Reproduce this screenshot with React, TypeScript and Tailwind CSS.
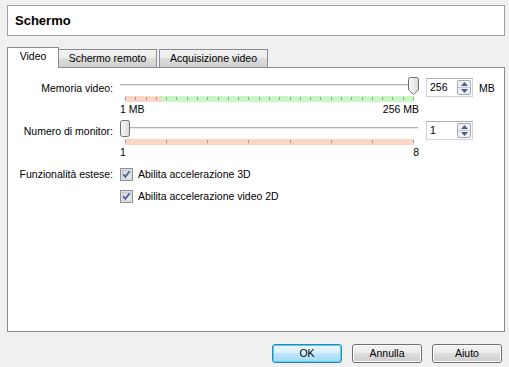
import React from 'react'

const font = "font-['Liberation_Sans',Arial,sans-serif]"

function Thumb({ pointed }: { pointed?: boolean }) {
  return (
    <svg width="11" height="18" viewBox="0 0 11 18" className="block">
      <defs>
        <linearGradient id={pointed ? 'tg1' : 'tg2'} x1="0" y1="0" x2="1" y2="0">
          <stop offset="0" stopColor="#f7f7f7" />
          <stop offset="0.5" stopColor="#ececec" />
          <stop offset="1" stopColor="#d6d6d6" />
        </linearGradient>
      </defs>
      {pointed ? (
        <path
          d="M2.5 0.5 H8.5 Q10.5 0.5 10.5 2.5 V13 L5.5 17.5 L0.5 13 V2.5 Q0.5 0.5 2.5 0.5 Z"
          fill="url(#tg1)"
          stroke="#707070"
        />
      ) : (
        <path
          d="M2.5 0.5 H7.5 Q9.5 0.5 9.5 2.5 V14 Q9.5 16.5 7.5 16.5 H2.5 Q0.5 16.5 0.5 14 V2.5 Q0.5 0.5 2.5 0.5 Z"
          fill="url(#tg2)"
          stroke="#707070"
        />
      )}
    </svg>
  )
}

function TickBar({ ticks, redWidth }: { ticks: number; redWidth: number }) {
  const w = 289
  const lines = Array.from({ length: ticks + 1 }, (_, i) => Math.round((i * (w - 1)) / ticks) + 0.5)
  return (
    <svg width={w} height="6" className="block ml-[5px]">
      <rect x="0" y="0" width={redWidth} height="6" fill="#fdd5c6" />
      <rect x={redWidth} y="0" width={w - redWidth} height="6" fill="#c9f7c3" />
      {lines.map((x) => (
        <line key={x} x1={x} y1="1" x2={x} y2="4" stroke="#9a9a9a" strokeWidth="1" />
      ))}
    </svg>
  )
}

function Slider({ at, pointed, ticks, redWidth, min, max }: { at: 'start' | 'end'; pointed?: boolean; ticks: number; redWidth: number; min: string; max: string }) {
  return (
    <div className="w-[300px] shrink-0">
      <div className="relative h-[19px]">
        <div className="absolute left-0 top-[7px] w-[298px] h-[2px] border-t border-[#b0b0b0] bg-[#e8e8e8]" />
        <div className={`absolute top-0 ${at === 'end' ? 'left-[288px]' : 'left-0'}`}>
          <Thumb pointed={pointed} />
        </div>
      </div>
      <TickBar ticks={ticks} redWidth={redWidth} />
      <div className="mt-px flex justify-between leading-[13px] w-[299px]">
        <span>{min}</span>
        <span>{max}</span>
      </div>
    </div>
  )
}

function SpinBox({ value }: { value: string }) {
  return (
    <div className="mt-px w-[47px] h-[19px] shrink-0 bg-white border border-[#cfd3d9] border-t-[#abadb3] flex items-center pl-[3px] pr-px">
      <span className="flex-1 leading-[13px]">{value}</span>
      <div className="w-[14px] h-[15px] border border-[#a9abae] rounded-[2px] flex flex-col bg-[#eef0f3]">
        <div className="flex-1 flex items-center justify-center border-b border-[#c3c6cb]">
          <svg width="7" height="4" viewBox="0 0 7 4"><path d="M0 4 L3.5 0 L7 4 Z" fill="#4d6185" /></svg>
        </div>
        <div className="flex-1 flex items-center justify-center">
          <svg width="7" height="4" viewBox="0 0 7 4"><path d="M0 0 L7 0 L3.5 4 Z" fill="#4d6185" /></svg>
        </div>
      </div>
    </div>
  )
}

function CheckBox({ label }: { label: string }) {
  return (
    <div className="flex items-center gap-[5px]">
      <svg width="13" height="13" viewBox="0 0 13 13" className="block shrink-0">
        <defs>
          <linearGradient id="cbg" x1="0" y1="0" x2="1" y2="1">
            <stop offset="0" stopColor="#cbcfd5" />
            <stop offset="1" stopColor="#f6f6f6" />
          </linearGradient>
        </defs>
        <rect x="0.5" y="0.5" width="12" height="12" fill="#f4f4f4" stroke="#8e8f8f" />
        <rect x="2" y="2" width="9" height="9" fill="url(#cbg)" stroke="#aeb3b9" strokeWidth="0.6" />
        <path d="M3.3 6.4 L5.4 8.8 L9.6 3.2" fill="none" stroke="#4a5f97" strokeWidth="1.7" />
      </svg>
      <span className="leading-[13px]">{label}</span>
    </div>
  )
}

const btn =
  'w-[70px] h-[19px] rounded-[3px] border flex items-center justify-center leading-[13px] text-black'

export default function App() {
  return (
    <div className={`${font} text-[10.5px] text-black w-[509px] h-[367px] bg-[#f0f0f0] pt-[5px] pl-[7px] pr-[4px] flex flex-col`}>
      {/* Header */}
      <div className="h-[31px] bg-white border border-[#a0a0a0] flex items-center pl-[7px]">
        <span className="text-[13px] font-bold">Schermo</span>
      </div>

      {/* Tabs */}
      <div className="mt-[11px] h-[20px] flex items-end">
        <div className="relative z-10 -mb-px w-[52px] h-[21px] bg-white border border-b-0 border-[#898c95] flex items-center justify-center pb-[2px]">
          Video
        </div>
        <div className="w-[98px] h-[18px] border border-l-0 border-b-0 border-[#898c95] bg-[linear-gradient(#f2f2f2,#ebebeb_50%,#dddddd_50%,#cfcfcf)] flex items-center justify-center">
          Schermo remoto
        </div>
        <div className="ml-[2px] w-[109px] h-[18px] border border-b-0 border-[#898c95] bg-[linear-gradient(#f2f2f2,#ebebeb_50%,#dddddd_50%,#cfcfcf)] flex items-center justify-center">
          Acquisizione video
        </div>
      </div>

      {/* Panel */}
      <div className="h-[265px] bg-white border border-[#898c95] pt-[9px]">
        <div className="flex items-start">
          <div className="w-[105px] shrink-0 text-right mt-[5px] leading-[13px]">Memoria video:</div>
          <div className="ml-[7px]">
            <Slider at="end" pointed ticks={28} redWidth={36} min="1 MB" max="256 MB" />
          </div>
          <div className="ml-[6px]">
            <SpinBox value="256" />
          </div>
          <div className="ml-[6px] mt-[5px] leading-[13px]">MB</div>
        </div>

        <div className="flex items-start mt-[4px]">
          <div className="w-[105px] shrink-0 text-right mt-[5px] leading-[13px]">Numero di monitor:</div>
          <div className="ml-[7px]">
            <Slider at="start" ticks={7} redWidth={289} min="1" max="8" />
          </div>
          <div className="ml-[6px]">
            <SpinBox value="1" />
          </div>
        </div>

        <div className="flex items-center mt-[9px]">
          <div className="w-[105px] shrink-0 text-right leading-[13px]">Funzionalità estese:</div>
          <div className="ml-[7px]">
            <CheckBox label="Abilita accelerazione 3D" />
          </div>
        </div>
        <div className="flex items-center mt-[9px] pl-[112px]">
          <CheckBox label="Abilita accelerazione video 2D" />
        </div>
      </div>

      {/* Buttons */}
      <div className="mt-[12px] flex justify-end gap-[10px] pr-[3px]">
        <button className={`${btn} border-[#3c7fb1] bg-[linear-gradient(#eaf6fd,#d9f0fc_50%,#bee6fd_50%,#a7d9f5)] shadow-[inset_0_0_0_1px_#48d6f8]`}>
          OK
        </button>
        <button className={`${btn} border-[#707070] bg-[linear-gradient(#f2f2f2,#ebebeb_50%,#dddddd_50%,#cfcfcf)] shadow-[inset_0_0_0_1px_#fcfcfc]`}>
          Annulla
        </button>
        <button className={`${btn} border-[#707070] bg-[linear-gradient(#f2f2f2,#ebebeb_50%,#dddddd_50%,#cfcfcf)] shadow-[inset_0_0_0_1px_#fcfcfc]`}>
          Aiuto
        </button>
      </div>
    </div>
  )
}
